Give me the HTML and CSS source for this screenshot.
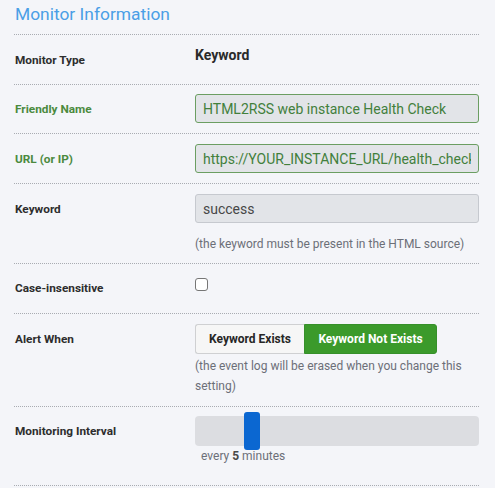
FILE: index.html
```html
<!DOCTYPE html>
<html>
<head>
<meta charset="utf-8">
<link rel="stylesheet" href="styles.css">
</head>
<body>
<div class="panel">
  <h2 class="title">Monitor Information</h2>
  <div class="row row-type">
    <div class="label">Monitor Type</div>
    <div class="control"><div class="type-value">Keyword</div></div>
  </div>
  <div class="row row-name">
    <div class="label label-ok">Friendly Name</div>
    <div class="control"><input class="field field-ok" type="text" value="HTML2RSS web instance Health Check" readonly></div>
  </div>
  <div class="row">
    <div class="label label-ok">URL (or IP)</div>
    <div class="control"><input class="field field-ok" type="text" value="https://YOUR_INSTANCE_URL/health_check" readonly></div>
  </div>
  <div class="row row-keyword">
    <div class="label">Keyword</div>
    <div class="control">
      <input class="field" type="text" value="success" readonly>
      <div class="help help-keyword">(the keyword must be present in the HTML source)</div>
    </div>
  </div>
  <div class="row row-case">
    <div class="label label-tall">Case-insensitive</div>
    <div class="control"><span class="checkbox"></span></div>
  </div>
  <div class="row">
    <div class="label label-tall">Alert When</div>
    <div class="control">
      <div class="btn-group">
        <span class="btn">Keyword Exists</span>
        <span class="btn btn-active">Keyword Not Exists</span>
      </div>
      <div class="help help-alert">(the event log will be erased when you change this setting)</div>
    </div>
  </div>
  <div class="row row-interval">
    <div class="label label-tall">Monitoring Interval</div>
    <div class="control">
      <div class="slider"><span class="thumb"></span></div>
      <div class="interval-text">every <b>5</b> minutes</div>
    </div>
  </div>
</div>
</body>
</html>
```

FILE: styles.css
```css
html, body {
  margin: 0;
  padding: 0;
  background: #f4f5f9;
  font-family: Roboto, "Liberation Sans", sans-serif;
  color: #2d2d2d;
}
.panel {
  width: 465px;
  padding: 0 0 0 14px;
}
.title {
  margin: 0;
  padding: 2px 0 0 1px;
  box-sizing: border-box;
  height: 35px;
  font-size: 17.4px;
  line-height: 24px;
  font-weight: 400;
  color: #4a9fe6;
  border-bottom: 1px dotted #a9acb2;
}
.row {
  display: flex;
  padding: 10px 0 10px;
  border-bottom: 1px dotted #a9acb2;
}
.label {
  width: 180px;
  flex: none;
  height: 29px;
  display: flex;
  align-items: center;
  padding-left: 1px;
  font-size: 11.8px;
  font-weight: 700;
  color: #2d2d2d;
}
.label-tall {
  height: 30px;
}
.label-ok {
  color: #4b8a3e;
}
.control {
  flex: 1;
  min-width: 0;
}
.row-type {
  padding: 10px 0 9px;
}
.row-type .label {
  height: 30px;
}
.type-value {
  font-size: 14px;
  font-weight: 700;
  line-height: 20px;
  color: #2a2a2a;
}
.row-name {
  padding: 9px 0 10px;
}
.field {
  display: block;
  width: 100%;
  box-sizing: border-box;
  height: 29px;
  margin: 0;
  padding: 0 7px;
  border: 1px solid #c6c9cf;
  border-radius: 3px;
  background: #e2e4e8;
  font-family: Roboto, "Liberation Sans", sans-serif;
  font-size: 14px;
  color: #474747;
  outline: none;
}
.field-ok {
  border-color: #6b9e62;
  color: #42803c;
}
.row-keyword {
  padding: 10px 0 9px;
}
.help {
  font-size: 12px;
  line-height: 20px;
  color: #6c6f78;
}
.help-keyword {
  margin-top: 11px;
}
.help-alert {
  margin-top: 2px;
}
.row-case {
  padding: 9px 0 10px;
}
.checkbox {
  display: block;
  margin-top: 5px;
  width: 13px;
  height: 13px;
  box-sizing: border-box;
  border: 1px solid #767676;
  border-radius: 3px;
  background: #fff;
}
.btn-group {
  display: flex;
  height: 30px;
}
.btn {
  display: flex;
  align-items: center;
  justify-content: center;
  box-sizing: border-box;
  font-size: 12px;
  font-weight: 700;
}
.btn:first-child {
  width: 109px;
  background: #f6f6f6;
  border: 1px solid #cfd0d2;
  border-right: none;
  border-radius: 3px 0 0 3px;
  color: #262626;
}
.btn-active {
  width: 133px;
  background: #3b9a2b;
  border: 1px solid #36902a;
  border-radius: 0 3px 3px 0;
  color: #fff;
}
.row-interval {
  padding: 9px 0 19px;
}
.slider {
  position: relative;
  height: 30px;
  border-radius: 4px;
  background: #dcdde1;
}
.thumb {
  position: absolute;
  left: 49px;
  top: -4px;
  width: 16px;
  height: 38px;
  border-radius: 3px;
  background: #0b67d1;
}
.interval-text {
  padding-left: 6px;
  font-size: 12px;
  line-height: 20px;
  color: #6c6f78;
}
.interval-text b {
  color: #4a4a4a;
}
```
